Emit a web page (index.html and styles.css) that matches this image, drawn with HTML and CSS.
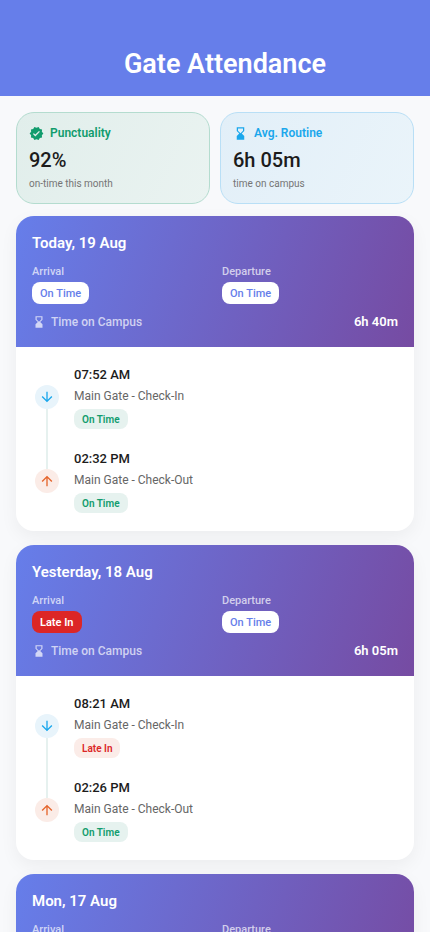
FILE: index.html
```html
<!DOCTYPE html>
<html lang="en">
<head>
<meta charset="utf-8">
<meta name="viewport" content="width=device-width, initial-scale=1">
<title>Gate Attendance</title>
<link rel="stylesheet" href="styles.css">
</head>
<body>
<svg class="sprite" aria-hidden="true">
  <symbol id="hourglass" viewBox="0 0 24 24"><path fill-rule="evenodd" d="M18 22l-.010-6L14 12l3.990-4.010L18 2H6v6l4 4-4 3.990V22zM8 7.500V4h8v3.500l-4 4z"/></symbol>
  <symbol id="verified" viewBox="0 0 24 24"><path fill-rule="evenodd" d="M23 12l-2.440-2.790.340-3.690-3.610-.820-1.890-3.200L12 2.960 8.600 1.500 6.710 4.690 3.100 5.500l.340 3.700L1 12l2.440 2.790-.340 3.700 3.610.820L8.600 22.500l3.400-1.470 3.400 1.460 1.890-3.190 3.610-.820-.340-3.690zm-12.910 4.720l-3.800-3.810 1.480-1.480 2.320 2.330 5.850-5.870 1.480 1.480z"/></symbol>
  <symbol id="down" viewBox="0 0 24 24"><path d="M20 12l-1.410-1.410L13 16.170V4h-2v12.170l-5.580-5.590L4 12l8 8z"/></symbol>
  <symbol id="up" viewBox="0 0 24 24"><path d="M4 12l1.410 1.410L11 7.830V20h2V7.830l5.580 5.590L20 12l-8-8z"/></symbol>
</svg>

<header class="app-bar"><h1>Gate Attendance</h1></header>

<main class="content">
  <section class="stats">
    <div class="stat stat-green">
      <h2 class="stat-title"><svg class="icon"><use href="#verified"/></svg>Punctuality</h2>
      <p class="stat-value">92%</p>
      <p class="stat-note">on-time this month</p>
    </div>
    <div class="stat stat-blue">
      <h2 class="stat-title"><svg class="icon"><use href="#hourglass"/></svg>Avg. Routine</h2>
      <p class="stat-value">6h 05m</p>
      <p class="stat-note">time on campus</p>
    </div>
  </section>

  <article class="day">
    <header class="day-head">
      <h2 class="day-title">Today, 19 Aug</h2>
      <div class="summary">
        <div><p class="label">Arrival</p><span class="chip">On Time</span></div>
        <div><p class="label">Departure</p><span class="chip">On Time</span></div>
      </div>
      <p class="total"><svg class="icon-small"><use href="#hourglass"/></svg><span>Time on Campus</span><strong>6h 40m</strong></p>
    </header>
    <ol class="events">
      <li class="event">
        <span class="dot dot-in"><svg class="arrow"><use href="#down"/></svg></span>
        <div><p class="time">07:52 AM</p><p class="place">Main Gate - Check-In</p><span class="tag">On Time</span></div>
      </li>
      <li class="event">
        <span class="dot dot-out"><svg class="arrow"><use href="#up"/></svg></span>
        <div><p class="time">02:32 PM</p><p class="place">Main Gate - Check-Out</p><span class="tag">On Time</span></div>
      </li>
    </ol>
  </article>

  <article class="day">
    <header class="day-head">
      <h2 class="day-title">Yesterday, 18 Aug</h2>
      <div class="summary">
        <div><p class="label">Arrival</p><span class="chip chip-late">Late In</span></div>
        <div><p class="label">Departure</p><span class="chip">On Time</span></div>
      </div>
      <p class="total"><svg class="icon-small"><use href="#hourglass"/></svg><span>Time on Campus</span><strong>6h 05m</strong></p>
    </header>
    <ol class="events">
      <li class="event">
        <span class="dot dot-in"><svg class="arrow"><use href="#down"/></svg></span>
        <div><p class="time">08:21 AM</p><p class="place">Main Gate - Check-In</p><span class="tag tag-late">Late In</span></div>
      </li>
      <li class="event">
        <span class="dot dot-out"><svg class="arrow"><use href="#up"/></svg></span>
        <div><p class="time">02:26 PM</p><p class="place">Main Gate - Check-Out</p><span class="tag">On Time</span></div>
      </li>
    </ol>
  </article>

  <article class="day">
    <header class="day-head day-head-open">
      <h2 class="day-title">Mon, 17 Aug</h2>
      <div class="summary">
        <div><p class="label">Arrival</p></div>
        <div><p class="label">Departure</p></div>
      </div>
    </header>
  </article>
</main>
</body>
</html>
```
FILE: styles.css
```css
* { box-sizing: border-box; margin: 0; padding: 0; }

body {
  background: #f8f9fb;
  color: #1c1c1c;
  font-family: Roboto, "Liberation Sans", sans-serif;
}

.sprite { display: none; }
.icon { width: 15px; height: 15px; fill: currentColor; }
.icon-small { width: 14px; height: 14px; fill: currentColor; }
.arrow { width: 16px; height: 16px; fill: currentColor; }

.app-bar {
  padding: 44px 0 12px 20px;
  background: #667eea;
  color: #fff;
  text-align: center;
}
.app-bar h1 { font-size: 27px; line-height: 40px; font-weight: 600; }

.content {
  display: flex;
  flex-direction: column;
  gap: 14px;
  padding: 16px;
}

.stats {
  display: grid;
  grid-template-columns: 1fr 1fr;
  gap: 10px;
  margin-bottom: -2px;
}
.stat { padding: 12px; border: 1px solid; border-radius: 18px; }
.stat-green { border-color: #b4dccf; background: linear-gradient(115deg, #e1eeeb, #eaf3f1); }
.stat-blue { border-color: #b9dff6; background: linear-gradient(115deg, #e2eff8, #eaf4fa); }
.stat-title {
  display: flex;
  align-items: center;
  gap: 6px;
  font-size: 12px;
  line-height: 16px;
  font-weight: 600;
}
.stat-green .stat-title { color: #119c6d; }
.stat-blue .stat-title { color: #1aa7ec; }
.stat-value { margin: 5px 0 3px; font-size: 20px; line-height: 28px; font-weight: 500; }
.stat-note { color: #757575; font-size: 10px; line-height: 14px; }

.day {
  overflow: hidden;
  border-radius: 18px;
  background: #fff;
  box-shadow: 0 6px 18px rgba(0, 0, 0, 0.05);
}
.day-head {
  padding: 16px 16px 15px;
  background: linear-gradient(108deg, #667eea, #764ba2);
  color: #fff;
}
.day-head-open { min-height: 131px; }
.day-title { font-size: 15px; line-height: 22px; font-weight: 600; }
.summary {
  display: grid;
  grid-template-columns: 1fr 1fr;
  gap: 14px;
  margin: 10px 0 8px;
}
.label {
  margin-bottom: 2px;
  color: rgba(255, 255, 255, 0.7);
  font-size: 11px;
  line-height: 16px;
  font-weight: 500;
}
.chip {
  display: block;
  width: fit-content;
  padding: 1px 8px 0;
  border-radius: 8px;
  background: #fff;
  color: #667eea;
  font-size: 11px;
  line-height: 21px;
  font-weight: 500;
}
.chip-late { background: #dc2626; color: #fff; font-weight: 600; }
.total {
  display: flex;
  align-items: center;
  gap: 5px;
  color: rgba(255, 255, 255, 0.7);
  font-size: 12px;
  line-height: 20px;
  font-weight: 500;
}
.total strong { margin-left: auto; color: #fff; font-size: 13px; font-weight: 600; }

.events {
  display: flex;
  flex-direction: column;
  gap: 20px;
  padding: 18px;
  list-style: none;
}
.event { display: flex; align-items: center; gap: 15px; }
.dot {
  position: relative;
  display: grid;
  place-items: center;
  width: 24px;
  height: 24px;
  margin-left: 1px;
  border-radius: 50%;
}
.dot-in { background: #e8f4fb; color: #1aa7ec; }
.dot-out { background: #fbece7; color: #e5642b; }
.dot-in::after {
  content: "";
  position: absolute;
  top: 24px;
  left: 11px;
  width: 2px;
  height: 60px;
  background: #e6f1ef;
}
.time { font-size: 13px; line-height: 20px; font-weight: 500; }
.place { margin: 2px 0 4px; color: #666; font-size: 12px; line-height: 18px; }
.tag {
  display: block;
  width: fit-content;
  padding: 1px 8px 0;
  border-radius: 8px;
  background: #e6f2ef;
  color: #119c6d;
  font-size: 10px;
  line-height: 19px;
  font-weight: 600;
}
.tag-late { background: #fbece8; color: #dc2626; }
```
